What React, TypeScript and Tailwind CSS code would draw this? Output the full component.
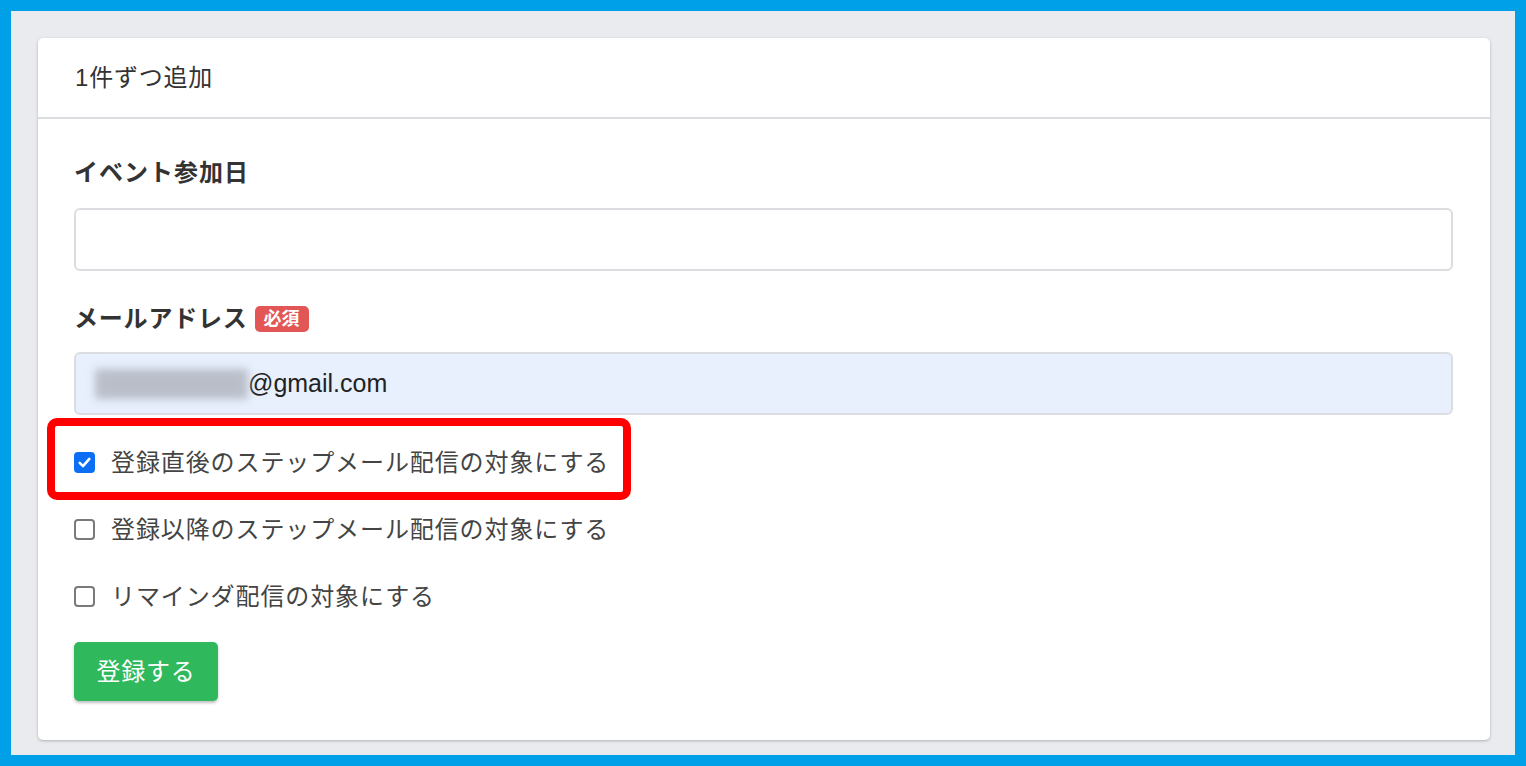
import React from "react";

const font = "font-['Liberation_Sans','Noto_Sans_CJK_JP',sans-serif]";

function Checkbox({ checked }: { checked: boolean }) {
  if (checked) {
    return (
      <span className="flex h-[21px] w-[21px] shrink-0 items-center justify-center rounded-[4px] bg-[#0b6ff5]">
        <svg width="15" height="15" viewBox="0 0 14 14" fill="none">
          <path d="M2.5 7.4 L5.6 10.4 L11.5 3.6" stroke="white" strokeWidth="2.4" strokeLinecap="round" strokeLinejoin="round" />
        </svg>
      </span>
    );
  }
  return <span className="h-[21px] w-[21px] shrink-0 rounded-[4px] border-2 border-[#7a7a7a] bg-white" />;
}

function CheckRow({ checked, label, boxed }: { checked: boolean; label: string; boxed?: boolean }) {
  return (
    <div className="relative flex h-[67px] items-center gap-[16px] text-[24px] text-[#444]">
      <Checkbox checked={checked} />
      <span className="leading-none tracking-[0.9px]">{label}</span>
      {/* annotation frame */}
      {boxed && (
        <div className="pointer-events-none absolute left-[-27px] top-[-11px] h-[82px] w-[584px] rounded-[10px] border-[8px] border-[#ff0000]" />
      )}
    </div>
  );
}

export default function App() {
  return (
    <div className={`h-[766px] w-[1526px] border-[11px] border-[#00a0e8] bg-[#eaebee] pl-[27px] pt-[27px] ${font}`}>
      <div className="h-[702px] w-[1452px] rounded-[5px] bg-white shadow-[0_1px_3px_rgba(0,0,0,0.25)]">
        {/* Header */}
        <div className="flex h-[81px] items-center border-b-2 border-[#dcdde0] px-[37px] text-[24px] tracking-[0.8px] text-[#333]">
          1件ずつ追加
        </div>

        <div className="px-[36px] pt-[36px]">
          <div className="h-[36px] text-[24px] font-bold leading-[36px] tracking-[1px] text-[#333]">イベント参加日</div>
          <div className="mt-[17px] h-[63px] w-[1379px] rounded-[6px] border-2 border-[#dcdde0] bg-white" />

          <div className="mt-[30px] flex h-[36px] items-center gap-[7px] text-[24px] font-bold text-[#333]">
            <span className="leading-[36px] tracking-[0.8px]">メールアドレス</span>
            <span className="flex h-[26px] items-center rounded-[5px] bg-[#e25656] px-[9px] text-[18px] leading-none text-white">
              必須
            </span>
          </div>
          <div className="mt-[15px] flex h-[63px] w-[1379px] items-center rounded-[6px] border-2 border-[#dcdde0] bg-[#e8f0fe] pl-[19px]">
            <div className="h-[30px] w-[153px] bg-[#b9bec8] blur-[4px]" />
            <span className="text-[25px] text-[#222]">@gmail.com</span>
          </div>

          <div className="mt-[14px]">
            <CheckRow checked boxed label="登録直後のステップメール配信の対象にする" />
            <CheckRow checked={false} label="登録以降のステップメール配信の対象にする" />
            <CheckRow checked={false} label="リマインダ配信の対象にする" />
          </div>

          <button className="mt-[12px] flex h-[59px] w-[144px] items-center justify-center rounded-[5px] bg-[#2fb95c] text-[24px] tracking-[0.8px] text-white shadow-[0_2px_3px_rgba(0,0,0,0.25)]">
            登録する
          </button>
        </div>
      </div>
    </div>
  );
}
